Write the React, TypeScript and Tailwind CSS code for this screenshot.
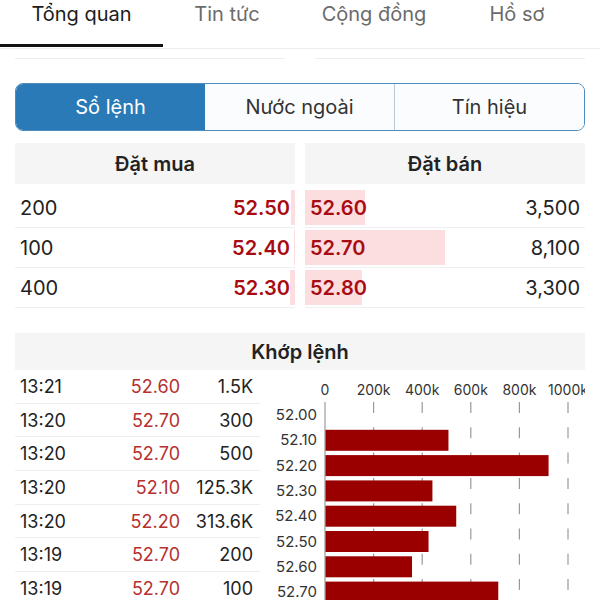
import React from "react";

const FONT = "font-['Inter','Liberation_Sans',sans-serif]";

const TABS = [
  { label: "Tổng quan", w: "w-[163px]", active: true },
  { label: "Tin tức", w: "w-[128px]", active: false },
  { label: "Cộng đồng", w: "w-[166px]", active: false },
  { label: "Hồ sơ", w: "w-[120px]", active: false },
];

const BIDS = [
  { vol: "200", price: "52.50", bar: 4 },
  { vol: "100", price: "52.40", bar: 1 },
  { vol: "400", price: "52.30", bar: 5 },
];

const ASKS = [
  { price: "52.60", vol: "3,500", bar: 60 },
  { price: "52.70", vol: "8,100", bar: 140 },
  { price: "52.80", vol: "3,300", bar: 57 },
];

const TRADES = [
  ["13:21", "52.60", "1.5K"],
  ["13:20", "52.70", "300"],
  ["13:20", "52.70", "500"],
  ["13:20", "52.10", "125.3K"],
  ["13:20", "52.20", "313.6K"],
  ["13:19", "52.70", "200"],
  ["13:19", "52.70", "100"],
];

const VOLUME_BY_PRICE = [
  { price: "52.00", v: 0 },
  { price: "52.10", v: 506 },
  { price: "52.20", v: 918 },
  { price: "52.30", v: 440 },
  { price: "52.40", v: 538 },
  { price: "52.50", v: 424 },
  { price: "52.60", v: 356 },
  { price: "52.70", v: 711 },
];

function VolumeChart() {
  const x0 = 55;
  const scale = 243 / 1000;
  const ticks = [0, 200, 400, 600, 800, 1000];
  return (
    <svg width="315" height="230" className="block">
      {ticks.map((t) => (
        <text
          key={t}
          x={x0 + t * scale}
          y={25}
          textAnchor="middle"
          fontSize="14"
          fill="#333"
          fontFamily="Inter, 'Liberation Sans', sans-serif"
        >
          {t === 0 ? "0" : `${t}k`}
        </text>
      ))}
      {ticks.slice(1).map((t) => (
        <line
          key={t}
          x1={x0 + t * scale}
          x2={x0 + t * scale}
          y1={32}
          y2={230}
          stroke="#9a9a9a"
          strokeWidth="1.2"
          strokeDasharray="11 14.3"
        />
      ))}
      <line x1={x0} x2={x0} y1={32} y2={230} stroke="#9a9a9a" strokeWidth="1.2" />
      {VOLUME_BY_PRICE.map((row, i) => {
        const cy = 45 + i * 25.3;
        return (
          <g key={row.price}>
            <text
              x={47}
              y={cy + 5}
              textAnchor="end"
              fontSize="15"
              fill="#333"
              fontFamily="Inter, 'Liberation Sans', sans-serif"
            >
              {row.price}
            </text>
            {row.v > 0 && (
              <rect x={x0 + 0.5} y={cy - 10.5} width={row.v * scale} height={21} fill="#9a0000" />
            )}
          </g>
        );
      })}
    </svg>
  );
}

export default function App() {
  return (
    <div className={`h-[600px] w-[600px] overflow-hidden bg-white ${FONT}`}>
      {/* top tabs */}
      <nav className="relative flex h-[49px] border-b border-[#ececec]">
        {TABS.map((tab) => (
          <div
            key={tab.label}
            className={`${tab.w} relative text-center text-[20px] leading-[28px] ${
              tab.active ? "text-[#1c1c1c]" : "text-[#6b6b6b]"
            }`}
          >
            {tab.label}
            {tab.active && <span className="absolute bottom-[1px] left-0 h-[3px] w-full bg-[#111]" />}
          </div>
        ))}
      </nav>

      <div className="flex gap-[30px] px-[15px]">
        <div className="h-[10px] flex-1 border-b border-[#ededed]" />
        <div className="h-[10px] flex-1 border-b border-[#ededed]" />
      </div>

      {/* segmented control */}
      <div className="mx-[15px] mt-[24px] flex h-[48px] overflow-hidden rounded-[8px] border border-[#4d8cbf] text-[20px]">
        <div className="flex flex-1 items-center justify-center bg-[#2a7ab8] text-white">Sổ lệnh</div>
        <div className="flex flex-1 items-center justify-center border-r border-[#b9c9d6] bg-[#fbfcfd] text-[#333]">
          Nước ngoài
        </div>
        <div className="flex flex-1 items-center justify-center bg-[#fbfcfd] text-[#333]">Tín hiệu</div>
      </div>

      {/* order book */}
      <div className="mt-[12px] grid grid-cols-2 gap-x-[10px] px-[15px]">
        <div>
          <div className="flex h-[41px] items-center justify-center bg-[#f5f5f5] text-[20px] font-semibold text-[#222]">
            Đặt mua
          </div>
          <div className="mt-[4px]">
            {BIDS.map((b) => (
              <div key={b.price} className="relative flex h-[40px] items-center justify-between border-b border-[#efefef] px-[5px] text-[20px]">
                <span
                  className="absolute inset-y-[2px] right-0 bg-[#fcdde0]"
                  style={{ width: b.bar }}
                />
                <span className="relative text-[#222]">{b.vol}</span>
                <span className="relative font-semibold text-[#a80c12]">{b.price}</span>
              </div>
            ))}
          </div>
        </div>
        <div>
          <div className="flex h-[41px] items-center justify-center bg-[#f5f5f5] text-[20px] font-semibold text-[#222]">
            Đặt bán
          </div>
          <div className="mt-[4px]">
            {ASKS.map((a) => (
              <div key={a.price} className="relative flex h-[40px] items-center justify-between border-b border-[#efefef] px-[5px] text-[20px]">
                <span
                  className="absolute inset-y-[2px] left-0 bg-[#fcdde0]"
                  style={{ width: a.bar }}
                />
                <span className="relative font-semibold text-[#a80c12]">{a.price}</span>
                <span className="relative text-[#222]">{a.vol}</span>
              </div>
            ))}
          </div>
        </div>
      </div>

      {/* matched orders */}
      <div className="mx-[15px] mt-[25px] flex h-[37px] items-center justify-center bg-[#f5f5f5] text-[20px] font-semibold text-[#222]">
        Khớp lệnh
      </div>
      <div className="flex px-[15px]">
        <div className="w-[245px]">
          {TRADES.map(([time, price, vol], i) => (
            <div key={i} className="flex h-[33.7px] items-center border-b border-[#efefef] pl-[5px] pr-[7px] text-[18px]">
              <span className="w-[60px] text-[#222]">{time}</span>
              <span className="w-[100px] text-right text-[#b5302f]">{price}</span>
              <span className="flex-1 text-right text-[#222]">{vol}</span>
            </div>
          ))}
        </div>
        <div className="ml-[10px]">
          <VolumeChart />
        </div>
      </div>
    </div>
  );
}
